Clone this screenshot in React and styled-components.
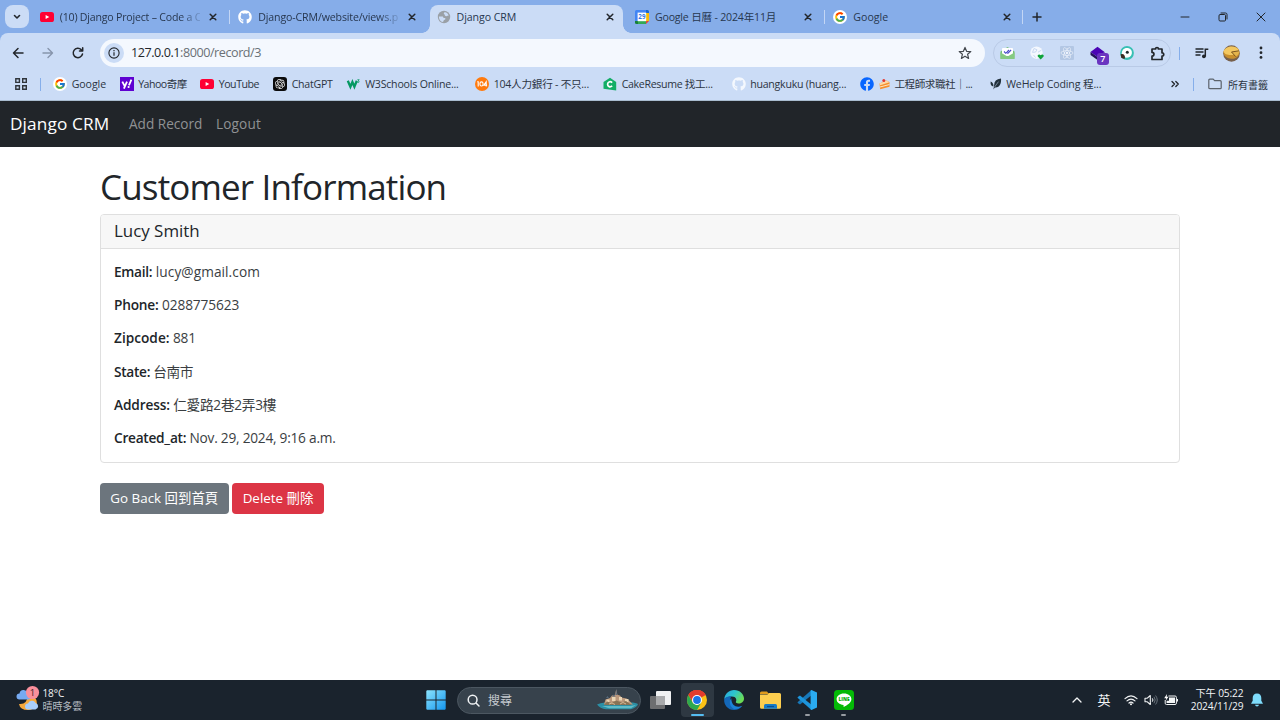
import React from "react";
import styled, { createGlobalStyle, css } from "styled-components";
import { FcGoogle } from "react-icons/fc";
import { FaGithub, FaFacebook, FaReact } from "react-icons/fa";
import { SiOpenai } from "react-icons/si";

const Global = createGlobalStyle`
  * { box-sizing: border-box; }
  body {
    margin: 0;
    overflow: hidden;
    font-family: "Open Sans", "Noto Sans CJK TC", sans-serif;
    color: #212529;
  }
  svg { display: block; flex: none; overflow: visible; }
`;

const Screen = styled.div`
  width: 1280px;
  height: 720px;
  display: flex;
  flex-direction: column;
  background: #fff;
`;

/* ---------- browser chrome ---------- */
const TabStrip = styled.div`
  height: 33px;
  flex: none;
  display: flex;
  background: #86ade9;
`;
const TabSearch = styled.div`
  width: 24px;
  height: 23px;
  margin: 5px 2.3px 0 5px;
  border-radius: 8px;
  background: #cbdcf6;
  display: flex;
  align-items: center;
  justify-content: center;
`;
const Tab = styled.div`
  width: 198.4px;
  flex: none;
  height: 33px;
  display: flex;
  align-items: center;
  padding: 0 0 0 8.5px;
  border-right: 1.5px solid ${(p) => (p.$line ? "#c3d6f5" : "transparent")};
  border-image: ${(p) =>
    p.$line
      ? "linear-gradient(#86ade9 10px, #c3d6f5 10px, #c3d6f5 24px, #86ade9 24px) 1"
      : "none"};
  ${(p) =>
    p.$active &&
    css`
      border: 0;
      position: relative;
      &::before {
        content: "";
        position: absolute;
        inset: 5px 3px 0 2px;
        border-radius: 8px 8px 0 0;
        background: #cbdcf6;
      }
      &::after {
        content: "";
        position: absolute;
        left: -6px;
        right: -5px;
        bottom: 0;
        height: 8px;
        background:
          radial-gradient(circle at 0 0, transparent 7.5px, #cbdcf6 8px) left / 8px 8px no-repeat,
          radial-gradient(circle at 100% 0, transparent 7.5px, #cbdcf6 8px) right / 8px 8px no-repeat;
      }
      & > * { position: relative; z-index: 1; }
    `}
`;
const TabTitle = styled.span`
  width: 140px;
  margin-left: 6px;
  overflow: hidden;
  white-space: nowrap;
  font-size: 10.6px;
  line-height: 18px;
  color: #27374f;
  letter-spacing: ${(p) => p.$ls || 0}px;
  ${(p) =>
    p.$fade &&
    css`
      mask-image: linear-gradient(90deg, #000 120px, rgba(0, 0, 0, 0.15) 141px);
    `}
`;
const CloseBox = styled.span`
  width: 14px;
  margin-left: 6.5px;
  display: flex;
  justify-content: center;
`;
const NewTab = styled.div`
  width: 27px;
  display: flex;
  align-items: center;
  justify-content: center;
`;
const WindowButtons = styled.div`
  margin-left: auto;
  width: 114px;
  display: flex;
  align-items: center;
  justify-content: space-around;
`;
const ToolbarBack = styled.div`
  height: 68px;
  flex: none;
  background: linear-gradient(#86ade9 9px, #cbdcf6 9px);
`;
const Toolbar = styled.div`
  height: 68px;
  background: #cbdcf6;
  border-radius: 8px 8px 0 0;
  border-bottom: 1px solid #a9bccf;
`;
const AddressRow = styled.div`
  height: 40px;
  display: flex;
  align-items: center;
`;
const NavButtons = styled.div`
  width: 100px;
  display: flex;
  align-items: center;
  padding: 0 0 1px 10px;
  gap: 14px;
`;
const Omnibox = styled.div`
  width: 885px;
  height: 28px;
  border-radius: 14px;
  background: #f4f8fe;
  display: flex;
  align-items: center;
  padding: 0 13px 0 4px;
`;
const InfoBadge = styled.span`
  width: 20px;
  height: 20px;
  border-radius: 50%;
  background: #cbdcf6;
  display: flex;
  align-items: center;
  justify-content: center;
`;
const Url = styled.span`
  flex: 1;
  margin-left: 7px;
  font-size: 12.6px;
  line-height: 20px;
  letter-spacing: -0.45px;
  color: #6a7076;
  b { font-weight: 400; color: #23272c; }
`;
const Extensions = styled.div`
  width: 178px;
  height: 28px;
  margin-left: 8px;
  border: 1.3px solid #b9cae6;
  border-radius: 14px;
  display: flex;
  align-items: center;
  padding-left: 5px;
`;
const ExtSlot = styled.span`
  width: 30.1px;
  flex: none;
  height: 24px;
  padding-left: 0.5px;
  display: flex;
  align-items: center;
  position: relative;
`;
const ExtCount = styled.span`
  position: absolute;
  left: 7.5px;
  top: 11.5px;
  width: 12px;
  height: 12px;
  border-radius: 3px;
  background: #6a35c0;
  color: #fff;
  font-size: 9px;
  line-height: 12px;
  font-weight: 600;
  text-align: center;
`;
const ToolbarLine = styled.span`
  width: 1.5px;
  height: 13px;
  background: #85aeea;
`;
const ToolbarEnd = styled.div`
  display: flex;
  align-items: center;
  padding-left: 7.5px;
`;
const MediaSlot = styled.span`margin-left: 15px;`;
const Avatar = styled.span`margin-left: 14px;`;
const MenuSlot = styled.span`margin-left: 19px;`;

const BookmarkBar = styled.div`
  height: 22px;
  display: flex;
  align-items: center;
  font-size: 10.6px;
  color: #2b3442;
  padding-left: 15px;
`;
const AppsSlot = styled.span`
  width: 38px;
  display: flex;
  align-items: center;
  gap: 12.5px;
`;
const Bookmark = styled.span`
  width: ${(p) => p.$w}px;
  flex: none;
  display: flex;
  align-items: center;
  gap: 4.7px;
  white-space: nowrap;
  line-height: 14px;
  letter-spacing: ${(p) => p.$ls || 0}px;
`;
const BookmarkEnd = styled.span`
  margin-left: auto;
  display: flex;
  align-items: center;
  white-space: nowrap;
  padding-right: 12px;
  gap: 14px;
`;
const AllBookmarks = styled.span`
  display: flex;
  align-items: center;
  gap: 6px;
  font-size: 10px;
`;

/* ---------- site ---------- */
const Page = styled.main`
  flex: 1;
  background: #fff;
`;
const SiteNav = styled.nav`
  height: 46.4px;
  background: #212529;
  display: flex;
  align-items: center;
  padding: 0 0 1px 10px;
`;
const Brand = styled.span`
  width: 119px;
  font-size: 17.2px;
  letter-spacing: 0.15px;
  color: #fff;
`;
const NavItem = styled.span`
  width: ${(p) => p.$w}px;
  font-size: 13.6px;
  letter-spacing: ${(p) => p.$ls || 0}px;
  color: #909294;
`;
const Container = styled.div`
  width: 1080px;
  margin: 0 auto;
  padding-top: 20px;
`;
const Title = styled.h1`
  margin: 0 0 7px;
  font-size: 35px;
  line-height: 40px;
  font-weight: 400;
  letter-spacing: -0.85px;
`;
const Card = styled.section`
  border: 1px solid #dfdfdf;
  border-radius: 4px;
  height: 249px;
  overflow: hidden;
`;
const CardHeader = styled.header`
  height: 34px;
  background: #f7f7f7;
  border-bottom: 1px solid #dfdfdf;
  padding-left: 13px;
  font-size: 16.9px;
  line-height: 32px;
`;
const CardBody = styled.div`
  padding: 12.4px 13px 0;
`;
const Field = styled.p`
  margin: 0 0 13.33px;
  font-size: 13.7px;
  line-height: 20px;
  color: #3a3e42;
  letter-spacing: ${(p) => p.$ls || 0}px;
  strong {
    font-weight: 600;
    color: #212529;
    letter-spacing: ${(p) => p.$labelLs || 0}px;
  }
`;
const Actions = styled.div`
  display: flex;
  gap: 3.5px;
  margin-top: 19.5px;
`;
const Button = styled.button`
  width: ${(p) => p.$w}px;
  height: 31.5px;
  border: 0;
  padding: 0 0 3px;
  border-radius: 4px;
  background: ${(p) => (p.$danger ? "#dc3545" : "#6c757d")};
  color: #fff;
  font-family: inherit;
  font-size: 13.4px;
  white-space: nowrap;
`;

/* ---------- taskbar ---------- */
const Taskbar = styled.footer`
  height: 40px;
  flex: none;
  background: #1a232d;
  color: #f2f4f6;
  display: flex;
  align-items: center;
`;
const Weather = styled.div`
  width: 426px;
  padding-left: 15px;
  display: flex;
  align-items: center;
  gap: 2.5px;
  font-size: 10px;
  line-height: 13px;
  letter-spacing: -0.1px;
  small { display: block; font-size: 10px; color: #b6bcc2; }
`;
const Search = styled.div`
  width: 184px;
  height: 27px;
  margin: 0 3px 0 11px;
  border: 1px solid #4c5761;
  border-radius: 14px;
  background: #37424c;
  display: flex;
  align-items: center;
  padding: 0 2px 0 9px;
  font-size: 12px;
  color: #c6cbd0;
  span { flex: 1; margin-left: 8px; }
`;
const TaskItem = styled.div`
  width: 33.6px;
  height: 34px;
  margin-right: 3px;
  flex: none;
  border-radius: 4px;
  background: ${(p) => (p.$active ? "#2e3842" : "transparent")};
  display: flex;
  align-items: center;
  justify-content: center;
  position: relative;
  &::after {
    content: "";
    position: absolute;
    bottom: 1px;
    width: ${(p) => (p.$active ? 13 : p.$open ? 5 : 0)}px;
    height: 2.4px;
    border-radius: 2px;
    background: ${(p) => (p.$active ? "#55bdf2" : "#989da2")};
  }
`;
const Tray = styled.div`
  margin-left: auto;
  padding-right: 17.5px;
  display: flex;
  align-items: center;
`;
const Lang = styled.span`
  font-size: 13px;
  line-height: 18px;
  padding-bottom: 1px;
  margin: 0 13px 0 15px;
`;
const TrayIcons = styled.span`
  display: flex;
  align-items: center;
  gap: 6px;
`;
const Clock = styled.div`
  width: 66px;
  text-align: right;
  font-size: 10.2px;
  line-height: 13.5px;
  letter-spacing: -0.13px;
  margin-right: 7px;
`;

/* ---------- icons ---------- */
const Svg = ({ w = 14, h = w, box = `0 0 ${w} ${h}`, children }) => (
  <svg width={w} height={h} viewBox={box} fill="none">
    {children}
  </svg>
);
const Stroke = ({ d, w = 14, h = w, c = "#22262b", sw = 1.4 }) => (
  <Svg w={w} h={h}>
    <path d={d} stroke={c} strokeWidth={sw} strokeLinecap="round" strokeLinejoin="round" />
  </Svg>
);
const YouTube = () => (
  <Svg w={14}>
    <rect x="0" y="2" width="14" height="10" rx="2.6" fill="#ff0033" />
    <path d="M5.6 4.9v4.2L9.3 7z" fill="#fff" />
  </Svg>
);
const GoogleMark = () => (
  <Svg w={14}>
    <circle cx="7" cy="7" r="7" fill="#fff" />
    <g transform="translate(1.2 1.2)">
      <FcGoogle size={11.6} />
    </g>
  </Svg>
);
const Globe = () => (
  <Svg w={14}>
    <circle cx="7" cy="7" r="6.2" fill="#9aa0a6" />
    <path d="M7.600 2.300c1.700-.3 3.600 1.200 4 3.200-.9.600-1.300 0-1.800.4-.8.600-2 .1-2-.9 0-.8-1-.7-1-1.500 0-.5.3-1 .8-1.200zM1.900 6.500l3.300.1c.8 0 1.300.7 1.300 1.400h1.300c.7 0 .9 1 .3 1.500-.7.600-1.500.5-1.500 1.300 0 .7-.5 1.200-1.300 1.100-2-.7-3.600-2.800-3.400-5.400z" fill="#cbdcf6" />
  </Svg>
);
const Calendar = () => (
  <Svg w={14}>
    <path d="M1.5 0H11v3H3v8H0V1.5Q0 0 1.5 0z" fill="#4285f4" />
    <path d="M11 0h1.5Q14 0 14 1.5V3h-3z" fill="#1967d2" />
    <path d="M11 3h3v8h-3z" fill="#fbbc04" />
    <path d="M3 11h8v3H3z" fill="#34a853" />
    <path d="M0 11h3v3H1.5Q0 14 0 12.5z" fill="#188038" />
    <path d="M11 14v-3h3z" fill="#ea4335" />
    <rect x="2.6" y="2.6" width="8.6" height="8.6" fill="#fff" />
    <text x="6.9" y="9.3" textAnchor="middle" fontSize="6.2" fontWeight="700" fill="#3376e0">29</text>
  </Svg>
);
const Close = () => <Stroke w={8} d="M1.200 1.200l5.600 5.600M6.800 1.200L1.200 6.800" sw={1.5} />;
const Star = () => (
  <Svg w={14}>
    <path d="M7 1.4l1.6 3.9 4.2.3-3.2 2.7 1 4.1L7 10.2l-3.6 2.2 1-4.1L1.2 5.6l4.2-.3z" stroke="#44494f" strokeWidth="1.2" strokeLinejoin="round" />
  </Svg>
);
const Mail = () => (
  <Svg w={15} h={14}>
    <path d="M.5 5.5L7.5 1l7 4.5V13h-14z" fill="#78c275" />
    <rect x="2" y="2" width="11" height="8" rx="1" fill="#fff" />
    <path d="M.5 6.5l7 4 7-4V12q0 1-1 1h-12q-1 0-1-1z" fill="#85ca82" />
    <path d="M4 5.500l1.800 1.800L9 4M7.300 6.900l.6.4 3.200-3.300" stroke="#4648c9" strokeWidth="1.1" />
  </Svg>
);
const GlobeHeart = () => (
  <Svg w={14}>
    <circle cx="6.5" cy="6.7" r="6.2" fill="#f4f8fe" />
    <path d="M4 2.5l3 1.3-1.5 2.3-3 .3zM8 6.2l3.4-2M3.5 9l2 2.5" stroke="#c9d9f2" strokeWidth="1" />
    <path d="M10.7 13.6L7.8 10.6C6.8 8.7 9.5 7.5 10.7 9.3c1.2-1.8 3.9-.6 2.9 1.3z" fill="#10a33a" />
  </Svg>
);
const ReactTile = () => (
  <Svg w={14}>
    <rect width="14" height="14" rx="1" fill="#b3c7e4" />
    <g transform="translate(.7 .7)" color="#f2f6fd">
      <FaReact size={12.600} />
    </g>
  </Svg>
);
const Diamond = () => (
  <Svg w={15}>
    <path d="M7.5.8l7 5.2-7 5L.5 6z" fill="#4b04b5" />
    <path d="M.5 6l7 5v3l-7-5z" fill="#24105d" />
    <path d="M14.5 6l-7 5v3l7-5z" fill="#360989" />
  </Svg>
);
const Bird = () => (
  <Svg w={14}>
    <circle cx="7" cy="7" r="6.9" fill="#38c0b4" />
    <path d="M1.800 8.500C1.500 2 6 1.600 8 2c3 .5 4.200 3 3.900 5.200-.4 3-2.700 4.500-6.100 4.500z" fill="#fff" />
    <path d="M.6 8.200q4.600-1.200 4.400 4.400-2.900.6-3.800-1.300z" fill="#3b2c20" />
    <circle cx="7.300" cy="6.300" r="1.500" fill="#1d2b2b" />
  </Svg>
);
const Puzzle = () => (
  <Stroke w={15} sw={1.7} d="M2 3h3.6C5.4 1 8.6 1 8.4 3H12v3.8c2.3-.1 2.3 3.4 0 3.3V13.5H2v-3.3c2.6-.2 2.6-3.6 0-3.8z" />
);
const Media = () => (
  <Svg w={14}>
    <path d="M.5 3h8M.5 6h8M.5 9h5" stroke="#22262b" strokeWidth="1.5" />
    <path d="M10.3 10.4V3.2h3" stroke="#22262b" strokeWidth="1.5" />
    <circle cx="8.9" cy="10.3" r="1.9" fill="#22262b" />
  </Svg>
);
const Shell = () => (
  <Svg w={17}>
    <circle cx="8.500" cy="8.500" r="8.300" fill="#77604c" />
    <path d="M.4 7.500C1.500.8 14.500-.3 16.400 6c.8 5-3.600 8.200-7.900 7.800C4.300 13.500 1 11.500.4 7.500z" fill="#c98f2c" />
    <path d="M.6 6.500C2.500.3 13.800 0 16 5.500c.3 5-14 6.500-15.400 1z" fill="#f3c861" />
    <path d="M8.500 7l7.600-1.200q.4 3.500-3.300 5.700z" fill="#e4b44c" />
    <path d="M16 5.800L8.500 7l4.200 4.600" stroke="#6f4a18" strokeWidth=".9" />
  </Svg>
);
const Apps = () => (
  <Svg w={12}>
    <g stroke="#30353b" strokeWidth="1.4">
      <path d="M.8.8h3.6v3.6H.8zM7.7.8h3.6v3.6H7.7zM.8 7.7h3.6v3.6H.8zM7.7 7.7h3.6v3.6H7.7z" />
    </g>
  </Svg>
);
const Yahoo = () => (
  <Svg w={14}>
    <rect width="14" height="14" fill="#5f01d1" />
    <path d="M2.3 4.6l2.4 4.6M7 4.6l-3.1 7M8.9 8.3L11.4 2.6" stroke="#fff" strokeWidth="1.8" />
    <circle cx="8.6" cy="10" r="1.1" fill="#fff" />
  </Svg>
);
const ChatGpt = () => (
  <Svg w={14}>
    <rect width="14" height="14" rx="3" fill="#0b0b0c" />
    <g transform="translate(2 2)" color="#fff">
      <SiOpenai size={10} />
    </g>
  </Svg>
);
const W3 = () => (
  <Svg w={14}>
    <path d="M.8 3.8l2.6 6 2-4.8 2 4.8 2.4-6" stroke="#059862" strokeWidth="2.3" />
    <path d="M10.4 2.7h1.8l-1 1.2q1.5.3.7 1.3-.7.6-1.6.1" stroke="#059862" strokeWidth=".8" />
  </Svg>
);
const Job104 = () => (
  <Svg w={14}>
    <circle cx="7" cy="7" r="7" fill="#ff7a0d" />
    <path d="M2.2 4.8h1v4.6M11.2 9.6V4.8L8.8 8.1h3.3" stroke="#fff" strokeWidth="1.1" />
    <rect x="5" y="4.9" width="3" height="4.1" rx="1.4" stroke="#fff" strokeWidth="1.1" />
  </Svg>
);
const Cake = () => (
  <Svg w={14}>
    <path d="M.5 5L7 .8 13.2 5v8.6L.5 11.8z" fill="#13ae67" />
    <path d="M9.2 5.6C7 3.8 4.6 5 4.6 7.3s2.5 3.3 4.6 1.6" stroke="#fff" strokeWidth="1.7" />
  </Svg>
);
const CakeEmoji = () => (
  <Svg w={11} h={12}>
    <path d="M.5 5.500L7.500 2.500l3 1.800v4.500L1.200 11.300z" fill="#f58f2c" />
    <path d="M.5 5.500L7.500 2.500l3 1.800-9.300 3z" fill="#ffd9a6" />
    <path d="M1 9l9.500-2.500" stroke="#ffe6c4" />
    <circle cx="4.800" cy="2.400" r="1.500" fill="#e2372e" />
  </Svg>
);
const Leaf = () => (
  <Svg w={12} h={14}>
    <path d="M11 1.500Q4 2.500 4.200 7.800L3.400 12.500l1.400-2C10 11 11.500 6 11 1.500z" fill="#22313c" />
    <path d="M.6 4.600Q.3 9.400 3.400 9.600 3.800 6 .6 4.600z" fill="#22313c" />
    <path d="M4.600 10L8.500 4.600" stroke="#cbdcf6" strokeWidth=".5" />
  </Svg>
);
const Folder = () => <Stroke w={14} h={12} c="#5b626b" sw={1.2} d="M.8 2.2q0-1 1-1h3.4l1.4 1.5h5.6q1 0 1 1v6q0 1-1 1H1.8q-1 0-1-1z" />;

const WeatherIcon = () => (
  <Svg w={25} h={26}>
    <path d="M13 8q9 0 9 9-3 6-9 6-8 0-9-6 8 1 9-9z" fill="#f6a93c" />
    <path d="M4.500 12.500a3 3 0 010-6 4.200 4.200 0 018-1 3.500 3.500 0 01.5 7z" fill="#76aaf2" />
    <path d="M13 22.500a3 3 0 010-6 4.200 4.200 0 017.600-.6 3.400 3.400 0 01-.1 6.600z" fill="#a9cffb" />
    <circle cx="17.500" cy="5.500" r="6.600" fill="#fa8f9c" />
    <text x="17.500" y="9" fontSize="9.5" textAnchor="middle" fill="#3a1f25">1</text>
  </Svg>
);
const Windows = () => (
  <Svg w={20}>
    <defs>
      <linearGradient id="win" x1="0" y1="0" x2="1" y2="1">
        <stop stopColor="#8be3fd" />
        <stop offset="1" stopColor="#1496ee" />
      </linearGradient>
    </defs>
    <path d="M1 .3h8.500v9.200H.3V1zM10.500.3H19l.7.700v8.500h-9.200zM.3 10.500h9.200v9.200H1L.3 19zM10.500 10.500h9.200V19l-.7.700h-8.500z" fill="url(#win)" />
  </Svg>
);
const Island = () => (
  <Svg w={41} h={22}>
    <path d="M0 15.500q3-1.500 8-2h28q4 .5 5 1.500-1 3.500-7 5.200H9Q3 19.500 0 15.500z" fill="#2b8fa5" />
    <path d="M5 17h28l6-1-5 3.200H12z" fill="#62bcc8" />
    <path d="M7 15.500l1.500-5 4.500-1.500 2-2.500 3-.8 1.200-5.500 1.200 5.500 2.600.8 1.500 2 5 1 2.500 2 4 4z" fill="#bb987c" />
    <path d="M9.500 10.500h3v3h-3zM15 8h3.500v4H15zM22 8h3v3.500h-3zM28 10h3.500v3H28z" fill="#ead5b4" />
    <path d="M9 9l1.500-2 1.500 2zM15 7.500l1.800-2 1.800 2zM18.400 6l.8-6 .9 6z" fill="#57697b" />
    <path d="M7 16l3-3.500 4.500 1.500 5-2.500 5 2 4.500-1.500 5.500 4z" fill="#877356" />
    <path d="M12 15l3-1 3 1.500M23 15l3-1.500 3 1.500" stroke="#dfc09c" strokeWidth=".9" />
  </Svg>
);
const TaskView = () => (
  <Svg w={21} h={20}>
    <rect x="6" y="1" width="15" height="14" rx="1" fill="#f0f1f2" />
    <rect x="0" y="6" width="15" height="13" rx="1" fill="#6d6e70" />
    <path d="M6 6h9v9H6z" fill="#a9aaac" />
  </Svg>
);
const Chrome = () => (
  <Svg w={20}>
    <circle cx="10" cy="10" r="10" fill="#fbc116" />
    <path d="M10 10L1.340 5A10 10 0 0118.660 5z" fill="#e33b2e" />
    <path d="M10 5h8.660A10 10 0 001.340 5L5.700 12.500z" fill="#e33b2e" />
    <path d="M1.340 5A10 10 0 0010 20l4.330-7.500L10 15l-4.330-2.500z" fill="#2da94f" />
    <circle cx="10" cy="10" r="5" fill="#fff" />
    <circle cx="10" cy="10" r="3.900" fill="#1a73e8" />
  </Svg>
);
const Edge = () => (
  <Svg w={20}>
    <defs>
      <linearGradient id="edgeTop" x1="0" y1="0" x2="1" y2=".5">
        <stop stopColor="#2ba5df" />
        <stop offset=".5" stopColor="#2cc4cf" />
        <stop offset="1" stopColor="#6bdc55" />
      </linearGradient>
    </defs>
    <path d="M.2 9C1 3.500 5 0 10 0c6 0 10 4.300 10 8.500 0 3.300-2.600 5-5.300 5-2.500 0-3.200-1-2.800-1.700 1-1.600.5-5.300-4-5.300C4 6.500 1.300 8 .2 9z" fill="url(#edgeTop)" />
    <path d="M.2 9C2 6.800 5 6 7.500 6.500 5 9 6 15 10 16.700c3 1.200 5.800.5 8.300-1C16.500 18.500 13.500 20 10 20 4 20-.5 15 .2 9z" fill="#1467b8" />
    <path d="M7.300 8.300C4.500 11 5.800 17 10 18.900c3.500.3 6.500-1 8.300-3.200-5 2.500-11 .5-11-7.400z" fill="#1c83d8" />
  </Svg>
);
const Explorer = () => (
  <Svg w={21} h={20}>
    <path d="M0 3q0-1.500 1.500-1.500H7L9 4H0z" fill="#e09b1c" />
    <path d="M0 4.500h7.500L9 3h10.500Q21 3 21 4.500v12.700q0 1.500-1.500 1.500h-18Q0 18.700 0 17.200z" fill="#fdce4f" />
    <path d="M4 18.700v-3.200q0-1.500 1.500-1.500h10q1.500 0 1.500 1.500v3.200z" fill="#177bc8" />
    <path d="M7 16.500h7" stroke="#0c4f8c" strokeWidth="1.200" />
  </Svg>
);
const VsCode = () => (
  <Svg w={20}>
    <path d="M14.500 5.300L3 14.400l-2.200-1.300q-.6-.6 0-1.200L14.500 0z" fill="#1778b9" />
    <path d="M14.500 14.700L3 5.600.8 6.900q-.6.600 0 1.200L14.500 20z" fill="#1d95dc" />
    <path d="M14.500 0L20 2.500v15L14.500 20q-.7 0-.9-.8V.8q.2-.7.9-.8z" fill="#2aabf0" />
  </Svg>
);
const Line = () => (
  <Svg w={20}>
    <rect width="20" height="20" rx="3.500" fill="#04b906" />
    <path d="M10 3.600c4.300 0 7.400 2.500 7.400 5.700 0 3.600-5 6.300-7.500 7.700-.5.100-.1-1.500-.5-2C5.500 14.600 2.600 12.400 2.600 9.300c0-3.200 3.100-5.700 7.400-5.700z" fill="#fff" />
    <text x="10" y="11.300" fontSize="4.800" fontWeight="800" textAnchor="middle" fill="#04a906">LINE</text>
  </Svg>
);
const Wifi = () => (
  <Svg w={14} h={12}>
    <path d="M1 4.600Q7-1 13 4.600M3 6.900q4-3.700 8 0M5 9q2-1.800 4 0" stroke="#f3f5f6" strokeWidth="1.200" strokeLinecap="round" />
    <circle cx="7" cy="10.300" r="1" fill="#f3f5f6" />
  </Svg>
);
const Speaker = () => (
  <Svg w={14} h={12}>
    <path d="M1 4.200h2.300L6.300 1.500v9L3.300 7.800H1z" stroke="#f3f5f6" strokeWidth="1.100" strokeLinejoin="round" />
    <path d="M8.300 4.300q1.300 1.700 0 3.400" stroke="#f3f5f6" />
    <path d="M10 2.800q2.400 3.200 0 6.400M11.600 1.500q3.300 4.500 0 9" stroke="#68717a" />
  </Svg>
);
const Battery = () => (
  <Svg w={14} h={12}>
    <path d="M4.500 2h6.600q1.300 0 1.300 1.300v5.900q0 1.300-1.300 1.300H2.500q-1.300 0-1.300-1.300V6" stroke="#f3f5f6" />
    <path d="M5 3.500h6v5.600H2.600V6.700H5zM13 4.900h1v2.600h-1z" fill="#f3f5f6" />
    <path d="M3 0L.2 4.300h2L1.500 7l3-4.200H2.700z" fill="#fff" />
  </Svg>
);
const Bell = () => (
  <Svg w={12} h={14}>
    <path d="M6 .4Q10.300.6 10.300 5v2.700L12 10.800H0l1.700-3.100V5Q1.700.6 6 .4zM4 11.700h4q-.4 1.700-2 1.700t-2-1.700z" fill="#7fdcfb" />
  </Svg>
);

/* ---------- data ---------- */
const tabs = [
  { icon: <YouTube />, title: "(10) Django Project – Code a C", fade: true, line: true, ls: -0.21 },
  { icon: <FaGithub size={14} color="#fff" />, title: "Django-CRM/website/views.p", fade: true, ls: -0.13 },
  { icon: <Globe />, title: "Django CRM", active: true, ls: -0.07 },
  { icon: <Calendar />, title: "Google 日曆 - 2024年11月", line: true, ls: -0.2 },
  { icon: <GoogleMark />, title: "Google", line: true, ls: 0 },
];
const bookmarks = [
  { w: 66.5, ls: -0.08, icon: <GoogleMark />, text: "Google" },
  { w: 80.5, ls: -0.5, icon: <Yahoo />, text: "Yahoo奇摩" },
  { w: 73, ls: -0.45, icon: <YouTube />, text: "YouTube" },
  { w: 73.5, ls: -0.25, icon: <ChatGpt />, text: "ChatGPT" },
  { w: 128.5, ls: -0.2, icon: <W3 />, text: "W3Schools Online..." },
  { w: 128, ls: -0.25, icon: <Job104 />, text: "104人力銀行 - 不只..." },
  { w: 128.5, ls: -0.32, icon: <Cake />, text: "CakeResume 找工..." },
  { w: 128.5, ls: -0.24, icon: <FaGithub size={14} color="#f4f8fe" />, text: "huangkuku (huang..." },
  { w: 129.5, ls: -0.45, icon: <><FaFacebook size={14} color="#0866ff" /><CakeEmoji /></>, text: "工程師求職社｜..." },
  { w: 125, ls: -0.13, icon: <Leaf />, text: "WeHelp Coding 程..." },
];
const fields = [
  { label: "Email:", value: "lucy@gmail.com", labelLs: -0.3, ls: 0.06 },
  { label: "Phone:", value: "0288775623", labelLs: -0.2, ls: -0.12 },
  { label: "Zipcode:", value: "881", labelLs: 0, ls: -0.2 },
  { label: "State:", value: "台南市", labelLs: -0.3, ls: -0.4 },
  { label: "Address:", value: "仁愛路2巷2弄3樓", labelLs: -0.13, ls: -0.3 },
  { label: "Created_at:", value: "Nov. 29, 2024, 9:16 a.m.", labelLs: -0.27, ls: -0.24 },
];

export default function App() {
  return (
    <Screen>
      <Global />
      <TabStrip>
        <TabSearch>
          <Stroke w={8} h={6} d="M1.500 1.500L4 4l2.500-2.500" sw={1.600} />
        </TabSearch>
        {tabs.map((t) => (
          <Tab key={t.title} $active={t.active} $line={t.line}>
            {t.icon}
            <TabTitle $fade={t.fade} $ls={t.ls}>{t.title}</TabTitle>
            <CloseBox><Close /></CloseBox>
          </Tab>
        ))}
        <NewTab><Stroke w={10} d="M5 1v8M1 5h8" sw={1.500} /></NewTab>
        <WindowButtons>
          <Stroke w={10} d="M1 5h8" sw={1} />
          <Stroke w={10} d="M1 3.500q0-1 1-1h4.500q1 0 1 1V8q0 1-1 1H2Q1 9 1 8zM3 1h4.500Q9 1 9 2.500V7" sw={1} />
          <Stroke w={10} d="M1 1l8 8M9 1L1 9" sw={1} />
        </WindowButtons>
      </TabStrip>

      <ToolbarBack>
        <Toolbar>
          <AddressRow>
            <NavButtons>
              <Stroke w={16} d="M13 8H3.500M8 3.500L3.500 8 8 12.500" sw={1.500} />
              <Stroke w={16} c="#8795ac" d="M3 8h9.500M8 3.500L12.500 8 8 12.500" sw={1.400} />
              <Stroke w={16} d="M12.500 9a4.700 4.700 0 11-1.300-4.400L12.700 6M12.700 2.800V6H9.500" sw={1.500} />
            </NavButtons>
            <Omnibox>
              <InfoBadge>
                <Svg w={12}>
                  <circle cx="6" cy="6" r="5.100" stroke="#22262b" strokeWidth="1.100" />
                  <path d="M6 5.300v3.400M6 3.100v1.200" stroke="#22262b" strokeWidth="1.200" />
                </Svg>
              </InfoBadge>
              <Url><b>127.0.0.1</b>:8000/record/3</Url>
              <Star />
            </Omnibox>
            <Extensions>
              <ExtSlot><Mail /></ExtSlot>
              <ExtSlot><GlobeHeart /></ExtSlot>
              <ExtSlot><ReactTile /></ExtSlot>
              <ExtSlot><Diamond /><ExtCount>7</ExtCount></ExtSlot>
              <ExtSlot><Bird /></ExtSlot>
              <ExtSlot><Puzzle /></ExtSlot>
            </Extensions>
            <ToolbarEnd>
              <ToolbarLine />
              <MediaSlot><Media /></MediaSlot>
              <Avatar><Shell /></Avatar>
              <MenuSlot>
                <Svg w={4} h={14}>
                  <g fill="#22262b"><circle cx="2" cy="2" r="1.400" /><circle cx="2" cy="6.700" r="1.400" /><circle cx="2" cy="11.400" r="1.400" /></g>
                </Svg>
              </MenuSlot>
            </ToolbarEnd>
          </AddressRow>
          <BookmarkBar>
            <AppsSlot><Apps /><ToolbarLine /></AppsSlot>
            {bookmarks.map((b) => (
              <Bookmark key={b.text} $w={b.w} $ls={b.ls}>{b.icon}<span>{b.text}</span></Bookmark>
            ))}
            <BookmarkEnd>
              <Stroke w={8} d="M1 1.500L3.500 4 1 6.500M4.800 1.500L7.300 4 4.800 6.500" sw={1.300} />
              <ToolbarLine />
              <AllBookmarks><Folder />所有書籤</AllBookmarks>
            </BookmarkEnd>
          </BookmarkBar>
        </Toolbar>
      </ToolbarBack>

      <Page>
        <SiteNav>
          <Brand>Django CRM</Brand>
          <NavItem $w={87}>Add Record</NavItem>
          <NavItem $w={60} $ls={0.15}>Logout</NavItem>
        </SiteNav>
        <Container>
          <Title>Customer Information</Title>
          <Card>
            <CardHeader>Lucy Smith</CardHeader>
            <CardBody>
              {fields.map((f) => (
                <Field key={f.label} $ls={f.ls} $labelLs={f.labelLs}>
                  <strong>{f.label}</strong> {f.value}
                </Field>
              ))}
            </CardBody>
          </Card>
          <Actions>
            <Button $w={128.500}>Go Back 回到首頁</Button>
            <Button $w={92} $danger>Delete 刪除</Button>
          </Actions>
        </Container>
      </Page>

      <Taskbar>
        <Weather>
          <WeatherIcon />
          <div>18°C<small>晴時多雲</small></div>
        </Weather>
        <Windows />
        <Search>
          <Stroke w={13} c="#f1f3f5" sw={1.500} d="M9 9l3 3M10 5.700a4.400 4.400 0 11-8.800 0 4.400 4.400 0 018.800 0z" />
          <span>搜尋</span>
          <Island />
        </Search>
        <TaskItem><TaskView /></TaskItem>
        <TaskItem $active><Chrome /></TaskItem>
        <TaskItem><Edge /></TaskItem>
        <TaskItem><Explorer /></TaskItem>
        <TaskItem $open><VsCode /></TaskItem>
        <TaskItem $open><Line /></TaskItem>
        <Tray>
          <Stroke w={10} h={6} c="#f3f5f6" d="M1 5l4-4 4 4" sw={1.300} />
          <Lang>英</Lang>
          <TrayIcons><Wifi /><Speaker /><Battery /></TrayIcons>
          <Clock>下午 05:22<br />2024/11/29</Clock>
          <Bell />
        </Tray>
      </Taskbar>
    </Screen>
  );
}
